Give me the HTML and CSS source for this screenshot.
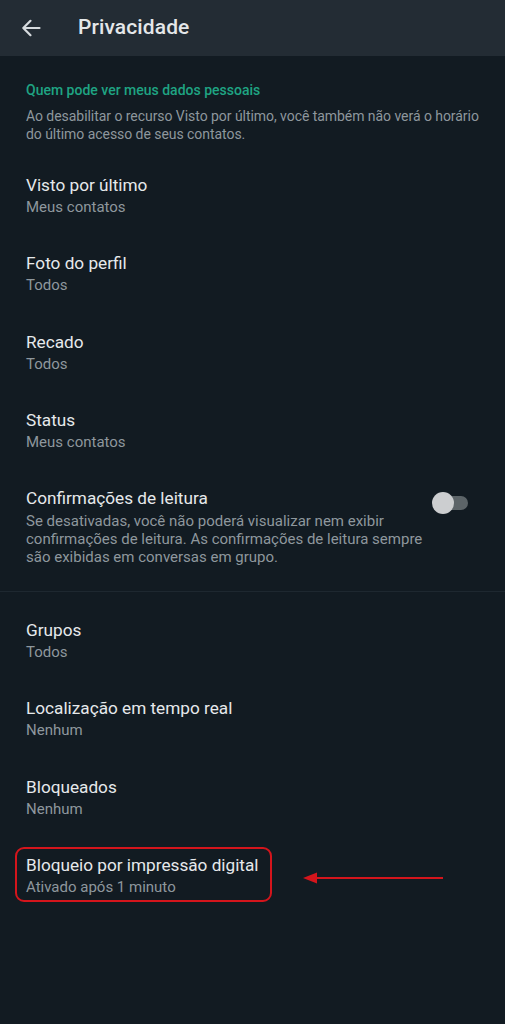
FILE: index.html
```html
<!DOCTYPE html>
<html lang="pt">
<head>
<meta charset="utf-8">
<link rel="stylesheet" href="styles.css">
</head>
<body>
<header class="appbar">
  <svg class="back" width="20" height="18" viewBox="0 0 20 18"><path d="M18.5 9H2.5M9.5 1.8L2.3 9l7.2 7.2" fill="none" stroke="#d6dbde" stroke-width="2.2" stroke-linecap="round" stroke-linejoin="round"/></svg>
  <h1 class="title">Privacidade</h1>
</header>
<main class="content">
  <section class="intro">
    <div class="section-title">Quem pode ver meus dados pessoais</div>
    <p class="intro-text">Ao desabilitar o recurso Visto por último, você também não verá o horário<br>do último acesso de seus contatos.</p>
  </section>
  <div class="item"><div class="item-title">Visto por último</div><div class="item-sub">Meus contatos</div></div>
  <div class="item"><div class="item-title">Foto do perfil</div><div class="item-sub">Todos</div></div>
  <div class="item"><div class="item-title">Recado</div><div class="item-sub">Todos</div></div>
  <div class="item"><div class="item-title">Status</div><div class="item-sub">Meus contatos</div></div>
  <div class="item item-toggle">
    <div class="item-text">
      <div class="item-title">Confirmações de leitura</div>
      <div class="item-desc">Se desativadas, você não poderá visualizar nem exibir<br>confirmações de leitura. As confirmações de leitura sempre<br>são exibidas em conversas em grupo.</div>
    </div>
    <div class="switch"><span class="track"></span><span class="thumb"></span></div>
  </div>
  <hr class="divider">
  <div class="item"><div class="item-title">Grupos</div><div class="item-sub">Todos</div></div>
  <div class="item"><div class="item-title">Localização em tempo real</div><div class="item-sub">Nenhum</div></div>
  <div class="item"><div class="item-title">Bloqueados</div><div class="item-sub">Nenhum</div></div>
  <div class="item item-marked">
    <div class="item-title">Bloqueio por impressão digital</div>
    <div class="item-sub">Ativado após 1 minuto</div>
    <span class="highlight"></span>
    <svg class="arrow" width="142" height="14" viewBox="0 0 142 14"><path d="M12 7H140" stroke="#d4151c" stroke-width="2.2"/><path d="M0 7L14 1.5V12.5Z" fill="#d4151c"/></svg>
  </div>
</main>
</body>
</html>
```

FILE: styles.css
```css
* { box-sizing: border-box; }
html, body { margin: 0; padding: 0; }
body {
  background: #121b22;
  font-family: Roboto, "Noto Sans", "Liberation Sans", sans-serif;
  color: #e6e9eb;
  width: 505px;
  min-height: 1024px;
}
.appbar {
  height: 56px;
  background: #232c34;
  display: flex;
  align-items: center;
  padding-left: 21px;
}
.back { display: block; margin-top: -1px; }
.title {
  margin: 0 0 2px 37px;
  font-size: 21px;
  font-weight: 500;
  color: #e4e7e9;
  letter-spacing: 0.1px;
}
.content { padding-top: 24px; }
.intro { padding: 0 20px 0 26px; margin-bottom: 13px; }
.section-title {
  color: #1fa483;
  font-size: 14px;
  font-weight: 500;
  line-height: 20px;
}
.intro-text {
  margin: 7px 0 0;
  font-size: 14px;
  line-height: 18px;
  color: #8e979d;
  white-space: nowrap;
  letter-spacing: -0.05px;
}
.item {
  position: relative;
  height: 78.3px;
  padding: 18px 26px 0;
}
.item-title {
  font-size: 17.2px;
  line-height: 22px;
  color: #e6e9eb;
}
.item-sub {
  margin-top: 1px;
  font-size: 15px;
  line-height: 20px;
  color: #8e979d;
}
.item-toggle {
  height: auto;
  display: flex;
  align-items: flex-start;
  padding-bottom: 25px;
  padding-right: 37px;
}
.item-text { flex: 1; }
.item-desc {
  margin-top: 3px;
  font-size: 15px;
  line-height: 18px;
  color: #8e979d;
  white-space: nowrap;
}
.switch {
  position: relative;
  width: 36px;
  height: 22px;
  margin-top: 5px;
  flex: none;
}
.track {
  position: absolute;
  left: 8px;
  right: 0;
  top: 4px;
  height: 14px;
  border-radius: 7px;
  background: #5c6468;
}
.thumb {
  position: absolute;
  left: 0;
  top: 0;
  width: 22px;
  height: 22px;
  border-radius: 50%;
  background: #ccced0;
}
.divider {
  margin: 0 0 9px;
  border: 0;
  height: 1px;
  background: #1e2830;
}
.highlight {
  position: absolute;
  left: 15px;
  top: 11px;
  width: 257px;
  height: 55px;
  border: 2px solid #d4151c;
  border-radius: 9px;
}
.arrow {
  position: absolute;
  left: 303px;
  top: 35px;
}
```
